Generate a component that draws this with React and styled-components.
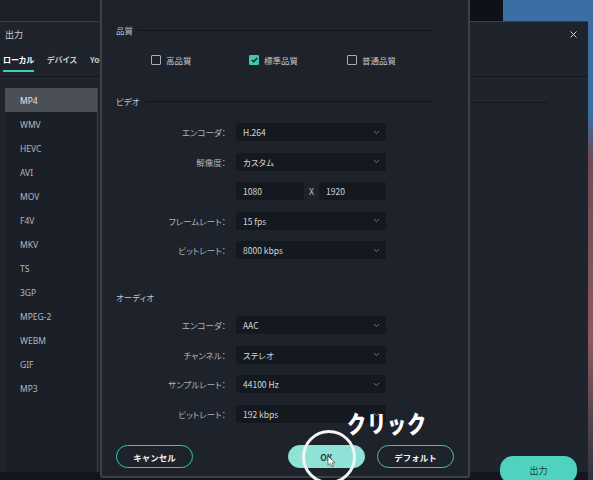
import React from 'react';
import styled, { createGlobalStyle } from 'styled-components';
import { ChevronDown, X } from 'lucide-react';

// export settings dialog over the output window

const GlobalStyle = createGlobalStyle`
  body {
    margin: 0;
    background: #151a22;
    font-family: "Noto Sans CJK JP", "Noto Sans", sans-serif;
    font-feature-settings: "palt";
  }
`;

const formats = ['MP4', 'WMV', 'HEVC', 'AVI', 'MOV', 'F4V', 'MKV', 'TS', '3GP', 'MPEG-2', 'WEBM', 'GIF', 'MP3'];

const Desktop = styled.div`
  position: relative;
  width: 593px;
  height: 480px;
  overflow: hidden;
  display: flex;
  flex-direction: column;
`;

const TopStrip = styled.div`
  height: 21px;
  display: flex;
  background: #1b2029;
`;

const TopDark = styled.div`
  margin-left: auto;
  width: 34px;
  background: #0e1218;
`;

const TopBlue = styled.div`
  width: 90px;
  background: #3b6ea4;
`;

const WindowRow = styled.div`
  flex: 1;
  display: flex;
  min-height: 0;
`;

const OutputWindow = styled.div`
  width: 588px;
  display: flex;
  flex-direction: column;
  border-top: 1px solid #3b4048;
  background: linear-gradient(to bottom, #1f242c calc(100% - 8px), #13171d calc(100% - 8px));
`;

const SideImage = styled.div`
  flex: 1;
  background: linear-gradient(to bottom, #3b6ea4 0 20%, #6e4a55 30%, #8a5a60 70%, #2d3440 100%);
`;

const TitleBar = styled.div`
  height: 25px;
  padding: 0 9px 0 5px;
  display: flex;
  align-items: center;
  justify-content: space-between;
  color: #c9cdd3;
  font-size: 9px;
`;

const TabBar = styled.div`
  height: 22px;
  padding: 7px 0 0 3px;
  display: flex;
  align-items: flex-start;
  gap: 13px;
  border-bottom: 1px solid #13171d;
`;

const Tab = styled.div`
  font-size: 8px;
  font-weight: 700;
  line-height: 12px;
  padding-bottom: 4px;
  color: ${({ active }) => (active ? '#ffffff' : '#c5c9cf')};
  border-bottom: 2px solid ${({ active }) => (active ? '#3fcdb4' : 'transparent')};
`;

const Body = styled.div`
  flex: 1;
  display: flex;
  min-height: 0;
`;

const FormatList = styled.div`
  width: 92px;
  margin: 11px 0 8px 5px;
  background: #1b2028;
  border-right: 1px solid #3d424a;
  display: flex;
  flex-direction: column;
`;

const FormatItem = styled.div`
  height: 24px;
  display: flex;
  align-items: center;
  padding-left: 15px;
  font-family: "Noto Sans", sans-serif;
  font-size: 8.5px;
  color: ${({ selected }) => (selected ? '#e4e6ea' : '#b3b7bd')};
  background: ${({ selected }) => (selected ? '#4b4f56' : 'transparent')};
`;

const RightPane = styled.div`
  flex: 1;
  display: flex;
  flex-direction: column;
  padding: 25px 11px 0 12px;
`;

const PaneLine = styled.div`
  height: 1px;
  margin-right: 28px;
  background: #13171d;
`;

const ExportButton = styled.button`
  margin-top: auto;
  align-self: flex-end;
  width: 77px;
  height: 28px;
  margin-bottom: -4px;
  border: none;
  border-radius: 13px;
  background: #4fd3bf;
  color: #1c3b36;
  font-family: inherit;
  font-size: 9px;
`;

const Dialog = styled.div`
  position: absolute;
  left: 100px;
  top: -3px;
  width: 370px;
  height: 481px;
  box-sizing: border-box;
  border: 2px solid #3c4149;
  border-radius: 3px;
  background: #1e232b;
  padding: 25px 14px 0 14px;
  display: flex;
  flex-direction: column;
`;

const SectionHead = styled.div`
  height: 12px;
  margin-top: ${({ top }) => top}px;
  display: flex;
  align-items: center;
  gap: 5px;
  padding-right: 22px;
  font-size: 8.5px;
  color: #c0c4ca;
  &::after {
    content: '';
    flex: 1;
    height: 1px;
    background: ${({ line }) => (line ? '#12161c' : 'transparent')};
  }
`;

const CheckRow = styled.div`
  height: 12px;
  margin-top: 18px;
  padding-left: 35px;
  display: grid;
  grid-template-columns: 98px 98px auto;
`;

const CheckItem = styled.label`
  display: flex;
  align-items: center;
  gap: 5px;
  font-size: 8.5px;
  color: #c4c8ce;
`;

const Box = styled.span`
  width: 8px;
  height: 8px;
  border: 1px solid ${({ checked }) => (checked ? '#40c9b1' : '#a9adb3')};
  border-radius: 1px;
  background: ${({ checked }) => (checked ? '#40c9b1' : 'transparent')};
  display: flex;
  align-items: center;
  justify-content: center;
`;

const FormGrid = styled.div`
  margin-top: ${({ top }) => top}px;
  display: grid;
  grid-template-columns: 110px 150px;
  column-gap: 10px;
  row-gap: ${({ gap }) => gap}px;
`;

const Label = styled.div`
  height: 18px;
  display: flex;
  align-items: center;
  justify-content: flex-end;
  font-size: 8.5px;
  color: #aeb3ba;
`;

const Select = styled.div`
  height: 18px;
  box-sizing: border-box;
  padding: 0 5px 0 7px;
  border-radius: 2px;
  background: #141920;
  display: flex;
  align-items: center;
  justify-content: space-between;
  font-size: 8.5px;
  color: #d3d6db;
  svg {
    color: #8d9298;
  }
`;

const SizeRow = styled.div`
  display: flex;
  align-items: center;
`;

const SizeInput = styled(Select)`
  width: ${({ w }) => w}px;
`;

const Times = styled.span`
  width: 15px;
  text-align: center;
  font-family: "Noto Sans", sans-serif;
  font-size: 8.5px;
  color: #c4c8ce;
`;

const ButtonRow = styled.div`
  margin-top: 22px;
  display: flex;
  gap: 12px;
`;

const PillButton = styled.button`
  width: 77px;
  height: 23px;
  box-sizing: border-box;
  border-radius: 12px;
  border: 1.5px solid ${({ primary }) => (primary ? '#8fe3d6' : '#3fc4ad')};
  background: ${({ primary }) => (primary ? '#8fe3d6' : 'transparent')};
  color: ${({ primary }) => (primary ? '#1d3a36' : '#f1f3f5')};
  font-family: inherit;
  font-size: 8.5px;
  font-weight: 700;
  margin-left: ${({ push }) => (push ? 'auto' : '0')};
`;

const ClickText = styled.div`
  position: absolute;
  left: 347px;
  top: 405px;
  font-size: 19px;
  font-weight: 900;
  letter-spacing: 1px;
  color: #ffffff;
  transform: scaleY(1.25);
  transform-origin: top left;
  font-feature-settings: normal;
`;

const Ring = styled.div`
  position: absolute;
  left: 302px;
  top: 430px;
  width: 48px;
  height: 48px;
  border: 3px solid #f4f4f4;
  border-radius: 50%;
`;

const Cursor = styled.svg`
  position: absolute;
  left: 327px;
  top: 455px;
`;

const videoRows = [
  ['エンコーダ：', 'H.264'],
  ['解像度：', 'カスタム'],
  null,
  ['フレームレート：', '15 fps'],
  ['ビットレート：', '8000 kbps'],
];

const audioRows = [
  ['エンコーダ：', 'AAC'],
  ['チャンネル：', 'ステレオ'],
  ['サンプルレート：', '44100 Hz'],
  ['ビットレート：', '192 kbps'],
];

const Row = ({ label, value }) => (
  <>
    <Label>{label}</Label>
    <Select>
      <span>{value}</span>
      <ChevronDown size={9} strokeWidth={2} />
    </Select>
  </>
);

const Check = ({ label, checked }) => (
  <CheckItem>
    <Box checked={checked}>
      {checked && (
        <svg width="7" height="6" viewBox="0 0 7 6">
          <path d="M0.8 3 L2.7 4.8 L6.2 1" stroke="#14221f" strokeWidth="1.5" fill="none" />
        </svg>
      )}
    </Box>
    {label}
  </CheckItem>
);

export default function App() {
  return (
    <Desktop>
      <GlobalStyle />
      <TopStrip>
        <TopDark />
        <TopBlue />
      </TopStrip>
      <WindowRow>
        <OutputWindow>
          <TitleBar>
            <span>出力</span>
            <X size={11} strokeWidth={2} color="#dadde2" />
          </TitleBar>
          <TabBar>
            <Tab active>ローカル</Tab>
            <Tab>デバイス</Tab>
            <Tab>YouTube</Tab>
          </TabBar>
          <Body>
            <FormatList>
              {formats.map((f, i) => (
                <FormatItem key={f} selected={i === 0}>{f}</FormatItem>
              ))}
            </FormatList>
            <RightPane>
              <PaneLine />
              <ExportButton>出力</ExportButton>
            </RightPane>
          </Body>
        </OutputWindow>
        <SideImage />
      </WindowRow>

      <Dialog>
        <SectionHead top={0} line>品質</SectionHead>
        <CheckRow>
          <Check label="高品質" />
          <Check label="標準品質" checked />
          <Check label="普通品質" />
        </CheckRow>

        <SectionHead top={29} line>ビデオ</SectionHead>
        <FormGrid top={16} gap={11.5}>
          {videoRows.map((r, i) =>
            r ? (
              <Row key={i} label={r[0]} value={r[1]} />
            ) : (
              <React.Fragment key={i}>
                <Label />
                <SizeRow>
                  <SizeInput w={68}>1080</SizeInput>
                  <Times>X</Times>
                  <SizeInput w={67}>1920</SizeInput>
                </SizeRow>
              </React.Fragment>
            )
          )}
        </FormGrid>

        <SectionHead top={32}>オーディオ</SectionHead>
        <FormGrid top={13} gap={11.7}>
          {audioRows.map((r, i) => (
            <Row key={i} label={r[0]} value={r[1]} />
          ))}
        </FormGrid>

        <ButtonRow>
          <PillButton>キャンセル</PillButton>
          <PillButton primary push>OK</PillButton>
          <PillButton>デフォルト</PillButton>
        </ButtonRow>
      </Dialog>

      <ClickText>クリック</ClickText>
      <Ring />
      <Cursor width="9" height="13" viewBox="0 0 9 13">
        <path d="M1 1 L1 10.5 L3.4 8.4 L5 12 L6.5 11.3 L5 7.8 L8 7.8 Z" fill="#ffffff" stroke="#333" strokeWidth="0.6" />
      </Cursor>
    </Desktop>
  );
}
